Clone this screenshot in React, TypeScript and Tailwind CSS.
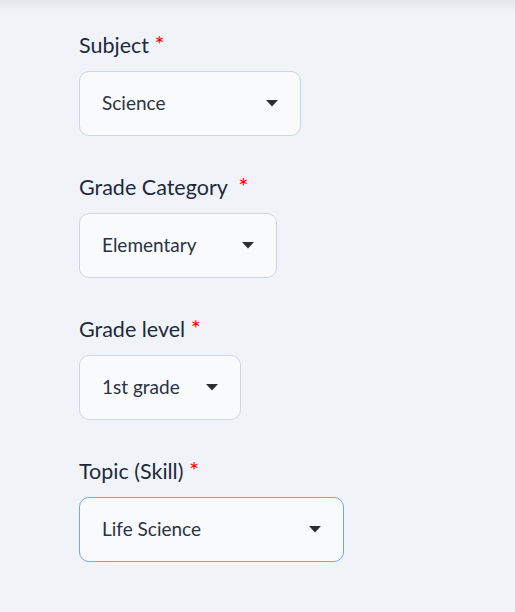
import React from "react";

type Field = {
  label: string;
  gap?: boolean;
  value: string;
  width: string;
  active?: boolean;
};

const fields: Field[] = [
  { label: "Subject", value: "Science", width: "w-[222px]" },
  { label: "Grade Category", gap: true, value: "Elementary", width: "w-[198px]" },
  { label: "Grade level", value: "1st grade", width: "w-[162px]" },
  { label: "Topic (Skill)", value: "Life Science", width: "w-[265px]", active: true },
];

const Caret = () => (
  <svg width="12" height="7" viewBox="0 0 12 7" className="shrink-0">
    <path d="M0 0 L12 0 L6 6.5 Z" fill="#2d2d2d" />
  </svg>
);

const SelectField = ({ field }: { field: Field }) => (
  <div className="flex flex-col">
    <label className="text-[21.5px] leading-[24px] text-[#1e2a3b]">
      {field.label}
      {field.gap ? "\u00a0 " : " "}
      <span className="text-[24px] text-[#ff0000]">*</span>
    </label>
    <button
      className={`mt-[14px] flex h-[65px] items-center justify-between rounded-[10px] border bg-[#f8fafc] pl-[22px] pr-[22px] text-left text-[19px] text-[#2a3342] ${field.width} ${
        field.active ? "border-[#7aa6dc]" : "border-[#cdd6e3]"
      }`}
    >
      <span>{field.value}</span>
      <Caret />
    </button>
  </div>
);

export default function App() {
  return (
    <div
      className="min-h-[612px] bg-[#f0f4f9]"
      style={{ fontFamily: "Lato, 'Open Sans', sans-serif" }}
    >
      <div className="h-[12px] bg-gradient-to-b from-[#e3e7ec] to-[#f0f4f9]" />
      <div className="flex flex-col gap-[38px] pl-[79px] pt-[20px]">
        {fields.map((f) => (
          <SelectField key={f.label} field={f} />
        ))}
      </div>
    </div>
  );
}
